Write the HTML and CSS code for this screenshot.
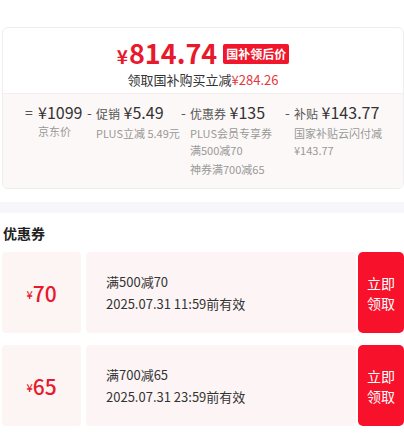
FILE: index.html
```html
<!DOCTYPE html>
<html lang="zh-CN">
<head>
  <meta charset="UTF-8" />
  <meta name="viewport" content="width=device-width, initial-scale=1.0" />
  <title>优惠券</title>
  <link rel="stylesheet" href="styles.css">
</head>
<body>

  <div class="price-card">
    <div class="price-head">
      <div class="price-line">
        <span class="price"><span class="yen">¥</span>814.74</span>
        <span class="badge">国补领后价</span>
      </div>
      <div class="price-sub">领取国补购买立减<span class="red">¥284.26</span></div>
    </div>

    <div class="breakdown">
      <div class="col col-1">
        <span class="op">=</span>
        <div class="col-body">
          <div class="col-top"><span class="val">¥1099</span></div>
          <div class="note">京东价</div>
        </div>
      </div>
      <div class="col col-2">
        <span class="op">-</span>
        <div class="col-body">
          <div class="col-top"><span class="lbl">促销</span> <span class="val">¥5.49</span></div>
          <div class="note">PLUS立减 5.49元</div>
        </div>
      </div>
      <div class="col col-3">
        <span class="op">-</span>
        <div class="col-body">
          <div class="col-top"><span class="lbl">优惠券</span> <span class="val">¥135</span></div>
          <div class="note">PLUS会员专享券<br>满500减70</div>
          <div class="note note-gap">神券满700减65</div>
        </div>
      </div>
      <div class="col col-4">
        <span class="op">-</span>
        <div class="col-body">
          <div class="col-top"><span class="lbl">补贴</span> <span class="val">¥143.77</span></div>
          <div class="note">国家补贴云闪付减<br>¥143.77</div>
        </div>
      </div>
    </div>
  </div>

  <div class="divider"></div>

  <h3 class="title">优惠券</h3>

  <div class="coupon">
    <div class="coupon-amount"><span class="cy">¥</span>70</div>
    <div class="coupon-info">
      <div>满500减70</div>
      <div>2025.07.31 11:59前有效</div>
    </div>
    <button class="coupon-btn">立即<br>领取</button>
  </div>

  <div class="coupon">
    <div class="coupon-amount"><span class="cy">¥</span>65</div>
    <div class="coupon-info">
      <div>满700减65</div>
      <div>2025.07.31 23:59前有效</div>
    </div>
    <button class="coupon-btn">立即<br>领取</button>
  </div>

</body>
</html>
```

FILE: styles.css
```css
body {
  margin: 0;
  padding: 27px 0 0 2px;
  background: #fff;
  font-family: "Noto Sans CJK SC", "Noto Sans", sans-serif;
  color: #333;
}
.price-card {
  border: 1px solid #eee;
  border-radius: 6px;
  overflow: hidden;
}
.price-head {
  padding: 9px 0 4px;
  text-align: center;
}
.price-line {
  display: flex;
  justify-content: center;
  align-items: center;
  gap: 6px;
  height: 34px;
}
.price {
  color: #e8192c;
  font-size: 27px;
  font-weight: 600;
  line-height: 34px;
}
.yen {
  font-size: 19px;
  margin-right: 1px;
}
.badge {
  background: #f0162b;
  color: #fff;
  font-size: 12px;
  font-weight: bold;
  line-height: 20px;
  padding: 0 3px;
  border-radius: 2px;
}
.price-sub {
  font-size: 13px;
  line-height: 18px;
}
.red {
  color: #e4393c;
}
.breakdown {
  display: flex;
  background: #fcf8f7;
  padding: 7px 0 10px 22px;
  border-top: 1px solid #f6eeec;
}
.col {
  display: flex;
  align-items: flex-start;
}
.col-1 { width: 62px; }
.col-2 { width: 94px; }
.col-3 { width: 104px; }
.op {
  width: 13px;
  font-size: 14px;
  line-height: 22px;
  color: #555;
}
.col-2 .op, .col-3 .op, .col-4 .op { width: 9px; }
.col-top {
  line-height: 22px;
  white-space: nowrap;
}
.lbl {
  font-size: 12px;
  color: #555;
}
.val {
  font-size: 16px;
  color: #333;
}
.note {
  font-size: 11px;
  line-height: 17px;
  color: #999;
  white-space: nowrap;
}
.col-body .note:first-of-type {
  margin-top: 5px;
}
.note-gap {
  margin-top: 2px;
}
.divider {
  height: 11px;
  background: #f7f7fa;
  margin: 13px 0 0 -2px;
}
.title {
  margin: 10px 0 9px 1px;
  font-size: 14px;
  line-height: 20px;
  font-weight: bold;
  color: #222;
}
.coupon {
  display: flex;
  height: 81px;
  margin-bottom: 12px;
}
.coupon-amount {
  width: 79px;
  background: #fdf4f4;
  border-radius: 4px;
  color: #e8192c;
  font-size: 21px;
  font-weight: 500;
  display: flex;
  align-items: center;
  justify-content: center;
}
.cy {
  font-size: 11px;
  margin-top: 3px;
}
.coupon-info {
  flex: 1;
  margin-left: 5px;
  background: #fdf5f5;
  border-radius: 4px;
  padding-left: 20px;
  display: flex;
  flex-direction: column;
  justify-content: center;
  font-size: 13px;
  line-height: 22px;
  color: #333;
}
.coupon-btn {
  width: 46px;
  margin-left: 2px;
  border: none;
  background: #f8112a;
  color: #fff;
  font-family: inherit;
  font-size: 14px;
  line-height: 20px;
  padding: 0;
  border-radius: 5px;
}
```
